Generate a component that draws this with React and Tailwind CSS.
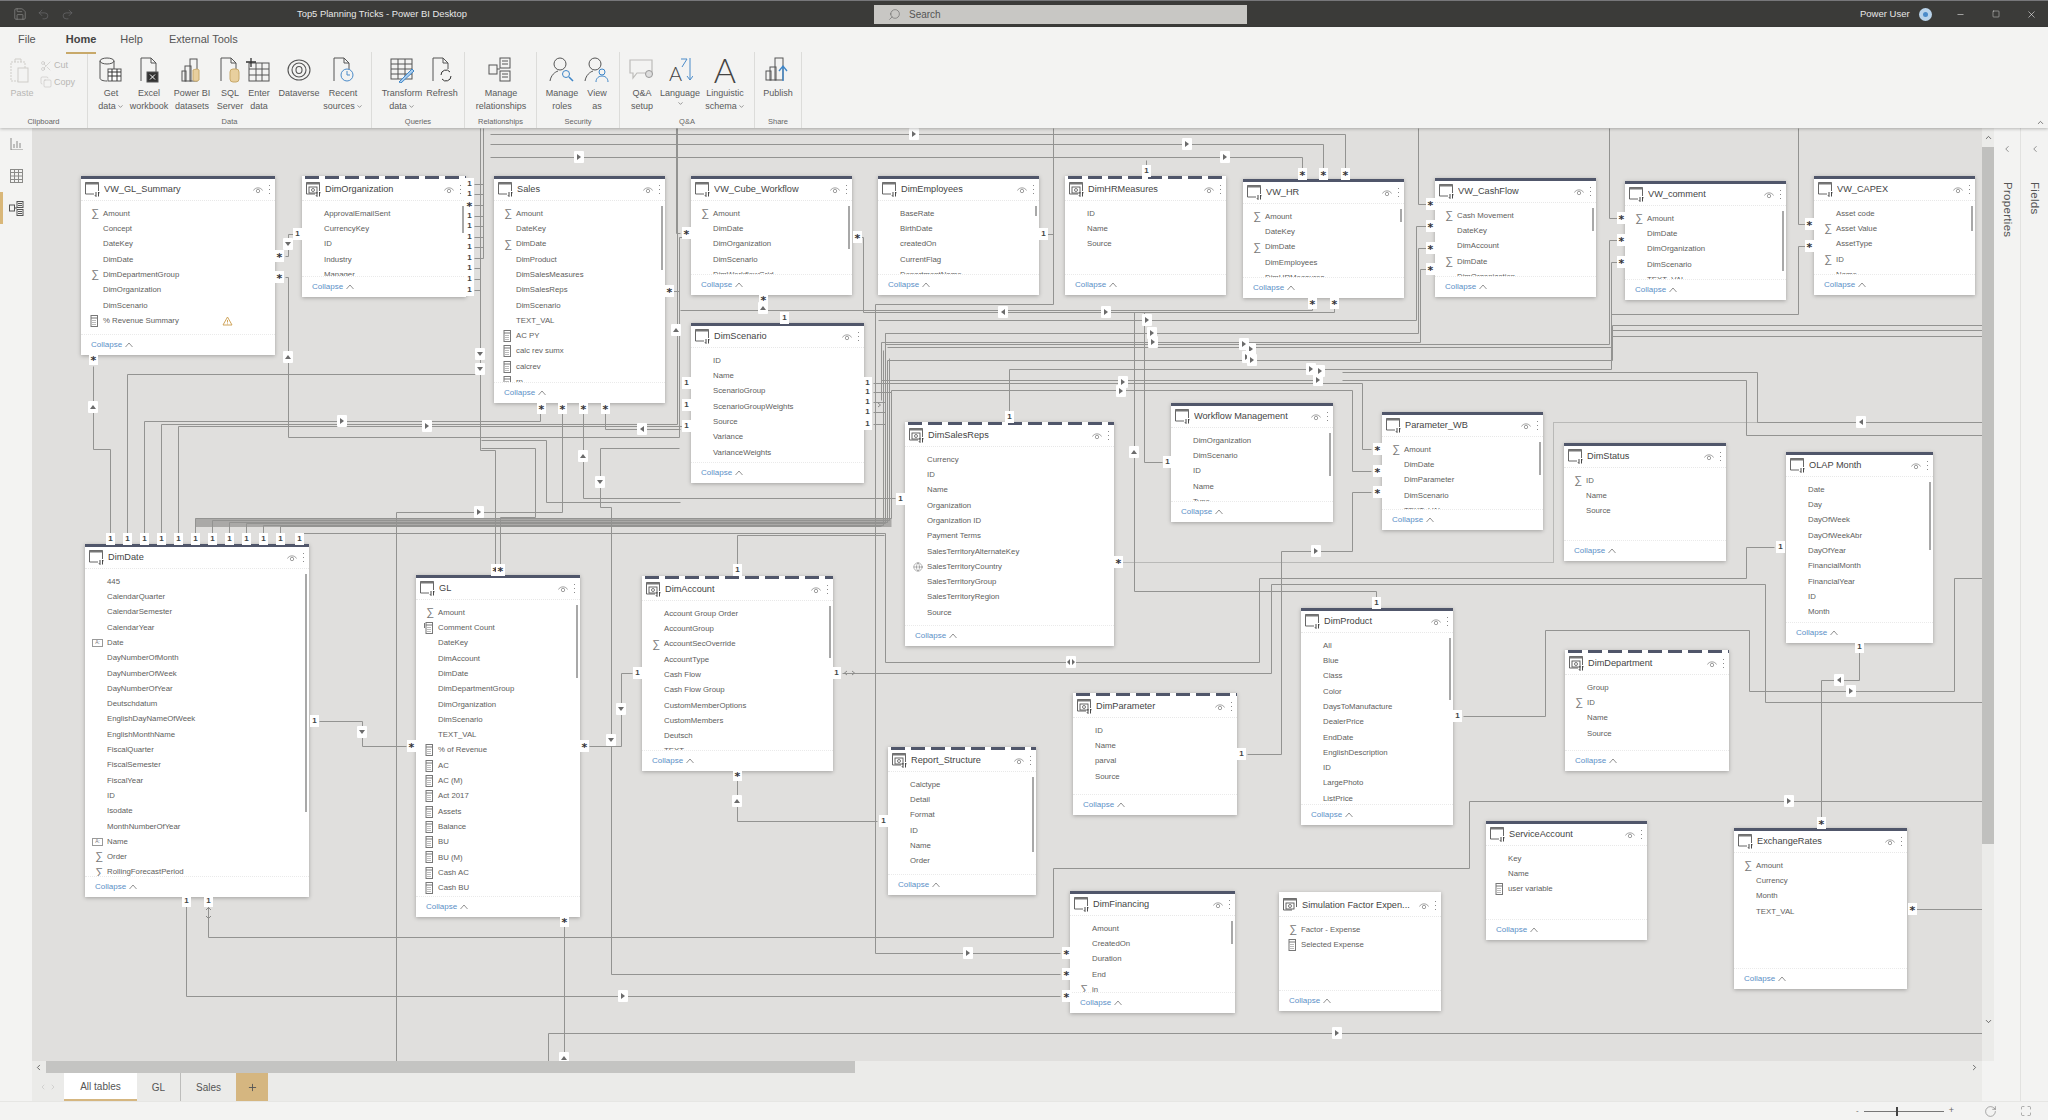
import React from "react";
import { Globe, Scissors, Copy, Minus, Plus, X, Square, Search, ChevronUp, ChevronDown, ChevronLeft, ChevronRight, RotateCw, Save, Undo2, Redo2, Maximize } from "lucide-react";

const OX = 32, OY = 128;

const TABLES = [
  { n: "VW_GL_Summary", x: 81, y: 176, w: 194, h: 179, rows: ["S:Amount", "Concept", "DateKey", "DimDate", "S:DimDepartmentGroup", "DimOrganization", "DimScenario", "M:% Revenue Summary!"] },
  { n: "DimOrganization", x: 302, y: 176, w: 164, h: 121, dash: 1, sb: 27, rows: ["ApprovalEmailSent", "CurrencyKey", "ID", "Industry", "Manager"] },
  { n: "Sales", x: 494, y: 176, w: 171, h: 227, sb: 64, rows: ["S:Amount", "DateKey", "S:DimDate", "DimProduct", "DimSalesMeasures", "DimSalesReps", "DimScenario", "TEXT_VAL", "M:AC PY", "M:calc rev sumx", "M:calcrev", "M:rp"] },
  { n: "VW_Cube_Workflow", x: 691, y: 176, w: 161, h: 119, sb: 43, rows: ["S:Amount", "DimDate", "DimOrganization", "DimScenario", "DimWorkflowGrid"] },
  { n: "DimEmployees", x: 878, y: 176, w: 161, h: 119, sb: 10, rows: ["BaseRate", "BirthDate", "createdOn", "CurrentFlag", "DepartmentName"] },
  { n: "DimHRMeasures", x: 1065, y: 176, w: 161, h: 119, dash: 1, rows: ["ID", "Name", "Source"] },
  { n: "VW_HR", x: 1243, y: 179, w: 161, h: 119, sb: 13, rows: ["S:Amount", "DateKey", "S:DimDate", "DimEmployees", "DimHRMeasures"] },
  { n: "VW_CashFlow", x: 1435, y: 178, w: 161, h: 119, sb: 23, rows: ["S:Cash Movement", "DateKey", "DimAccount", "S:DimDate", "DimOrganization"] },
  { n: "VW_comment", x: 1625, y: 181, w: 161, h: 119, sb: 60, rows: ["S:Amount", "DimDate", "DimOrganization", "DimScenario", "TEXT_VAL"] },
  { n: "VW_CAPEX", x: 1814, y: 176, w: 161, h: 119, sb: 25, rows: ["Asset code", "S:Asset Value", "AssetType", "S:ID", "Name"] },
  { n: "DimScenario", x: 691, y: 323, w: 173, h: 160, rows: ["ID", "Name", "ScenarioGroup", "ScenarioGroupWeights", "Source", "Variance", "VarianceWeights"] },
  { n: "DimSalesReps", x: 905, y: 422, w: 209, h: 224, dash: 1, rows: ["Currency", "ID", "Name", "Organization", "Organization ID", "Payment Terms", "SalesTerritoryAlternateKey", "G:SalesTerritoryCountry", "SalesTerritoryGroup", "SalesTerritoryRegion", "Source"] },
  { n: "Workflow Management", x: 1171, y: 403, w: 162, h: 119, sb: 43, rows: ["DimOrganization", "DimScenario", "ID", "Name", "Type"] },
  { n: "Parameter_WB", x: 1382, y: 412, w: 161, h: 118, sb: 33, rows: ["S:Amount", "DimDate", "DimParameter", "DimScenario", "TEXT_VAL"] },
  { n: "DimStatus", x: 1564, y: 443, w: 162, h: 118, rows: ["S:ID", "Name", "Source"] },
  { n: "OLAP Month", x: 1786, y: 452, w: 147, h: 191, sb: 68, rows: ["Date", "Day", "DayOfWeek", "DayOfWeekAbr", "DayOfYear", "FinancialMonth", "FinancialYear", "ID", "Month"] },
  { n: "DimDate", x: 85, y: 544, w: 224, h: 353, sb: 238, rows: ["445", "CalendarQuarter", "CalendarSemester", "CalendarYear", "D:Date", "DayNumberOfMonth", "DayNumberOfWeek", "DayNumberOfYear", "Deutschdatum", "EnglishDayNameOfWeek", "EnglishMonthName", "FiscalQuarter", "FiscalSemester", "FiscalYear", "ID", "Isodate", "MonthNumberOfYear", "D:Name", "S:Order", "S:RollingForecastPeriod"] },
  { n: "GL", x: 416, y: 575, w: 164, h: 342, sb: 73, rows: ["S:Amount", "K:Comment Count", "DateKey", "DimAccount", "DimDate", "DimDepartmentGroup", "DimOrganization", "DimScenario", "TEXT_VAL", "M:% of Revenue", "M:AC", "M:AC (M)", "M:Act 2017", "M:Assets", "M:Balance", "M:BU", "M:BU (M)", "M:Cash AC", "M:Cash BU"] },
  { n: "DimAccount", x: 642, y: 576, w: 191, h: 195, dash: 1, sb: 52, rows: ["Account Group Order", "AccountGroup", "S:AccountSecOverride", "AccountType", "Cash Flow", "Cash Flow Group", "CustomMemberOptions", "CustomMembers", "Deutsch", "TEXT"] },
  { n: "DimProduct", x: 1301, y: 608, w: 152, h: 217, sb: 62, rows: ["All", "Blue", "Class", "Color", "DaysToManufacture", "DealerPrice", "EndDate", "EnglishDescription", "ID", "LargePhoto", "ListPrice"] },
  { n: "DimDepartment", x: 1565, y: 650, w: 164, h: 121, dash: 1, rows: ["Group", "S:ID", "Name", "Source"] },
  { n: "DimParameter", x: 1073, y: 693, w: 164, h: 122, dash: 1, rows: ["ID", "Name", "parval", "Source"] },
  { n: "Report_Structure", x: 888, y: 747, w: 148, h: 148, dash: 1, sb: 75, rows: ["Calctype", "Detail", "Format", "ID", "Name", "Order"] },
  { n: "DimFinancing", x: 1070, y: 891, w: 165, h: 122, sb: 23, rows: ["Amount", "CreatedOn", "Duration", "End", "S:in"] },
  { n: "Simulation Factor Expen...", x: 1279, y: 892, w: 162, h: 119, sim: 1, rows: ["S:Factor - Expense", "M:Selected Expense"] },
  { n: "ServiceAccount", x: 1486, y: 821, w: 161, h: 119, rows: ["Key", "Name", "M:user variable"] },
  { n: "ExchangeRates", x: 1734, y: 828, w: 173, h: 161, rows: ["S:Amount", "Currency", "Month", "TEXT_VAL"] },
];

const LINES = [
  [[93, 366], [93, 449], [110, 449], [110, 539]],
  [[127, 539], [127, 374], [480, 374]],
  [[144, 539], [144, 421], [540, 421], [540, 408]],
  [[161, 539], [161, 424], [677, 424], [677, 128]],
  [[178, 539], [178, 426], [686, 426]],
  [[285, 256], [288, 256], [288, 234], [293, 234]],
  [[285, 277], [288, 277], [288, 437], [679, 437], [679, 237], [686, 237]],
  [[480, 128], [480, 450], [495, 450], [495, 570]],
  [[483, 128], [483, 258]],
  [[474, 184], [483, 184]], [[474, 194], [483, 194]], [[474, 205], [483, 205]], [[474, 216], [483, 216]], [[474, 226], [483, 226]], [[474, 237], [483, 237]], [[474, 247], [483, 247]], [[474, 258], [483, 258]], [[474, 268], [480, 268]], [[474, 279], [480, 279]], [[474, 290], [480, 290]],
  [[481, 440], [546, 440], [546, 502], [680, 502]],
  [[481, 448], [535, 448], [535, 517], [500, 517], [500, 570]],
  [[562, 408], [562, 512], [396, 512], [396, 1061]],
  [[583, 408], [583, 498], [895, 498]],
  [[605, 408], [605, 429], [680, 429]],
  [[600, 448], [679, 448]],
  [[600, 448], [600, 507], [611, 507], [611, 974], [1060, 974]],
  [[676, 128], [676, 233], [680, 233]],
  [[673, 291], [679, 291]],
  [[490, 134], [1345, 134], [1345, 170]],
  [[490, 144], [1323, 144], [1323, 170]],
  [[490, 157], [1302, 157], [1302, 170]],
  [[1146, 160], [1146, 166]],
  [[1047, 234], [1053, 234]],
  [[1053, 128], [1053, 304], [875, 304], [875, 953], [1060, 953]],
  [[680, 310], [1312, 310], [1312, 307]],
  [[860, 237], [863, 237], [863, 312], [1334, 312], [1334, 307]],
  [[1134, 312], [1134, 591], [1376, 591], [1376, 598]],
  [[1144, 312], [1144, 462], [1162, 462]],
  [[1418, 128], [1418, 204], [1426, 204]],
  [[1430, 226], [1416, 226], [1416, 320], [878, 320]],
  [[1430, 248], [1418, 248], [1418, 333], [885, 333], [885, 345]],
  [[1430, 269], [1420, 269], [1420, 342], [881, 342], [881, 400]],
  [[1609, 128], [1609, 218], [1617, 218]],
  [[1617, 240], [1609, 240], [1609, 344], [885, 344]],
  [[1617, 262], [1611, 262], [1611, 347], [887, 347]],
  [[1798, 128], [1798, 224], [1805, 224]],
  [[1805, 246], [1798, 246], [1798, 314], [1611, 314], [1611, 369], [1320, 369]],
  [[1612, 325], [1982, 325]], [[1612, 330], [1982, 330]], [[1612, 336], [1982, 336]],
  [[1612, 325], [1612, 360], [887, 360], [887, 522]],
  [[1009, 412], [1009, 369], [1320, 369]],
  [[881, 380], [1320, 380]],
  [[873, 383], [1362, 383], [1362, 449], [1371, 449]],
  [[873, 392], [891, 392], [891, 390], [1352, 390], [1352, 471], [1371, 471]],
  [[873, 402], [885, 402]], [[873, 412], [885, 412]], [[873, 424], [885, 424]],
  [[1371, 492], [1352, 492], [1352, 551], [1281, 551], [1281, 754], [1247, 754]],
  [[195, 539], [195, 518], [891, 518], [891, 392]],
  [[212, 539], [212, 520], [889, 520], [889, 358]],
  [[229, 539], [229, 522], [887, 522]],
  [[246, 539], [246, 523], [885, 523], [885, 333]],
  [[263, 539], [263, 525], [883, 525], [883, 350]],
  [[280, 539], [280, 526], [881, 526]],
  [[299, 539], [299, 533], [885, 533]],
  [[885, 533], [885, 662], [1259, 662], [1259, 578], [1746, 578], [1746, 547], [1774, 547]],
  [[737, 570], [737, 535], [884, 535]],
  [[1271, 584], [1271, 673], [842, 673]],
  [[1271, 584], [1765, 584], [1765, 702], [1982, 702]],
  [[1342, 372], [1757, 372], [1757, 422], [1982, 422]],
  [[1342, 380], [1746, 380], [1746, 435], [1982, 435]],
  [[1463, 716], [1545, 716], [1545, 630], [1749, 630], [1749, 691], [1954, 691], [1954, 578], [1982, 578]],
  [[1859, 650], [1859, 680], [1821, 680], [1821, 818]],
  [[208, 905], [208, 937], [1053, 937], [1053, 868], [1469, 868], [1469, 801], [1982, 801]],
  [[186, 905], [186, 996], [1060, 996]],
  [[548, 1061], [548, 1033], [1982, 1033]],
  [[564, 925], [564, 1061]],
  [[1916, 909], [1982, 909]],
  [[877, 821], [737, 821], [737, 780]],
  [[589, 746], [621, 746], [621, 673], [632, 673]],
  [[319, 721], [362, 721], [362, 746], [406, 746]],
];

const DOTTED = [
  [[1123, 562], [1553, 562], [1553, 422], [1982, 422]],
];

const ONES = [
  [110, 539], [127, 539], [144, 539], [161, 539], [178, 539], [195, 539], [212, 539], [229, 539], [246, 539], [263, 539], [280, 539], [299, 539],
  [297, 234], [469, 184], [469, 194], [469, 216], [469, 226], [469, 237], [469, 247], [469, 258], [469, 268], [469, 279], [469, 290],
  [686, 383], [686, 405], [686, 426], [784, 318], [867, 383], [867, 392], [867, 402], [867, 412], [867, 424], [1043, 234], [1146, 171],
  [1009, 417], [1167, 462], [900, 499], [1376, 603], [1241, 754], [836, 673], [1780, 547], [1859, 647], [1457, 716], [186, 901], [208, 901],
  [314, 721], [637, 673], [737, 570], [883, 821],
];
const STARS = [
  [93, 359], [279, 256], [279, 277], [469, 205], [541, 408], [562, 408], [583, 408], [605, 408], [669, 291], [686, 233], [857, 237], [763, 299],
  [1302, 174], [1323, 174], [1345, 174], [1312, 303], [1334, 303], [1430, 204], [1430, 226], [1430, 248], [1430, 269], [1621, 218], [1621, 240], [1621, 262],
  [1809, 224], [1809, 246], [1377, 449], [1377, 471], [1377, 492], [495, 570], [500, 570], [584, 746], [411, 746], [564, 921], [737, 775],
  [1118, 562], [1066, 953], [1066, 974], [1066, 996], [1821, 823], [1912, 909],
];
const BADGES = [
  [93, 407, "u"], [288, 244, "d"], [288, 357, "u"], [480, 354, "d"], [480, 369, "d"], [342, 421, "r"], [427, 426, "r"], [642, 429, "l"], [583, 456, "u"], [600, 482, "d"], [479, 512, "r"], [676, 330, "u"], [763, 308, "u"],
  [1003, 312, "l"], [1106, 312, "r"], [1147, 320, "r"], [1152, 333, "r"], [1153, 342, "r"], [1244, 344, "r"], [1251, 349, "r"], [1247, 357, "r"], [1252, 360, "r"], [1311, 369, "r"], [1320, 371, "r"], [1318, 380, "r"], [1123, 382, "r"], [1121, 391, "r"],
  [1134, 452, "u"], [1316, 551, "r"], [1071, 662, "b"], [1861, 422, "l"], [1851, 691, "r"], [1839, 680, "l"], [1789, 801, "r"], [1337, 1033, "r"], [623, 996, "r"], [968, 953, "r"], [737, 801, "u"], [362, 732, "d"], [621, 709, "d"], [611, 740, "d"], [579, 157, "r"], [914, 134, "r"], [1187, 144, "r"], [1225, 157, "r"], [564, 1058, "u"],
];
const CHEVRONS = [
  [208, 909, "M1 4 3.5 1.5 6 4"], [208, 917, "M1 2 3.5 4.5 6 2"], [846, 673, "M4 1 1.5 3 4 5"], [853, 673, "M2 1 4.5 3 2 5"], [879, 405, "M2 1 4.5 3 2 5"],
];

const sinkPoints = (p) => p.map(([x, y]) => `${x - OX + 0.5},${y - OY + 0.5}`).join(" ");

function Tri({ d }) {
  const shape = { u: "M4 2 7 6H1z", d: "M4 6 1 2h6z", l: "M2 4 6 1v6z", r: "M6 4 2 1v6z", b: "M0 4 3 1v6zM8 4 5 1v6z" }[d];
  return (
    <svg width="8" height="8" viewBox="0 0 8 8">
      <path d={shape} fill="#6b6b6b" />
    </svg>
  );
}

function FieldIcon({ t }) {
  if (t === "S") return <span className="text-[11px] leading-none text-[#777]">∑</span>;
  if (t === "G") return <Globe size={10} strokeWidth={1} color="#555" />;
  if (t === "D")
    return (
      <span className="flex h-[8px] w-[11px] items-center justify-center border border-[#999] text-[5px] leading-none text-[#777]">
        A:
      </span>
    );
  if (t === "M" || t === "K")
    return (
      <svg width="10" height="12" viewBox="0 0 10 12" fill="none" stroke="#777" strokeWidth="1">
        <rect x="2" y="0.5" width="6.5" height="11" />
        <path d="M2 3h6.5" />
        <path d="M3.5 5.5h3.5M3.5 7.5h3.5M3.5 9.5h3.5" strokeDasharray="1 1" />
        {t === "K" && <path d="M0.5 1v5" />}
      </svg>
    );
  return null;
}

function TableIcon({ dash, sim }) {
  return (
    <svg width="15" height="15" viewBox="0 0 15 15" fill="none" className="shrink-0">
      <path d="M0.5 12V0.5H13.5V9" stroke="#555" strokeWidth="0.9" />
      <path d="M0.5 12H9" stroke="#555" strokeWidth="0.9" />
      <rect x="0.5" y="0.5" width="13" height="2" fill="#777" />
      {(dash || sim) && <rect x="3" y="5" width="8" height="6" stroke="#555" strokeWidth="0.9" />}
      {(dash || sim) && <circle cx="7" cy="8" r="1.5" stroke="#555" strokeWidth="0.8" />}
      {!sim && <path d="M11 10v4.5M11 14.5l-1-1.2M13.5 14.5V10M13.5 10l1 1.2" stroke="#333" strokeWidth="0.9" />}
    </svg>
  );
}

function Eye() {
  return (
    <svg width="10" height="8" viewBox="0 0 10 8" fill="none" stroke="#888" strokeWidth="0.8">
      <path d="M0.5 4.5C2 1 8 1 9.5 4.5" />
      <circle cx="5" cy="5" r="1.7" />
    </svg>
  );
}

function Kebab() {
  return (
    <div className="flex flex-col gap-[2.5px]">
      <div className="h-[1.5px] w-[1.5px] rounded-full bg-[#666]" />
      <div className="h-[1.5px] w-[1.5px] rounded-full bg-[#666]" />
      <div className="h-[1.5px] w-[1.5px] rounded-full bg-[#666]" />
    </div>
  );
}

function Table({ t }) {
  const hasWarn = (r) => r.endsWith("!");
  return (
    <div
      className="absolute flex flex-col bg-white shadow-[0_1px_4px_rgba(0,0,0,0.28)]"
      style={{ left: t.x - OX, top: t.y - OY, width: t.w, height: t.h }}
    >
      {t.sim ? (
        <div className="h-[3px] shrink-0 bg-white" />
      ) : t.dash ? (
        <div className="h-[3px] shrink-0 bg-[repeating-linear-gradient(90deg,#fff_0px,#fff_3px,#50566a_3px,#50566a_17px,#fff_17px,#fff_20px)]" />
      ) : (
        <div className="h-[3px] shrink-0 bg-[#50566a]" />
      )}
      <div className="flex h-[22px] shrink-0 items-center border-b border-dotted border-[#e8e8e8] pl-[4px] pr-[5px]">
        <TableIcon dash={t.dash} sim={t.sim} />
        <span className="ml-[4px] flex-1 truncate text-[9.2px] text-[#444]">{t.n}</span>
        <Eye />
        <div className="ml-[6px]">
          <Kebab />
        </div>
      </div>
      <div className="relative flex-1 overflow-hidden pt-[5px]">
        {t.rows.map((r) => {
          const parts = r.includes(":") ? r.split(":") : [null, r];
          const label = parts[1].replace("!", "");
          return (
            <div key={r} className="flex h-[15.3px] items-center">
              <div className="flex w-[22px] shrink-0 items-center justify-end pr-[4px]">
                {parts[0] && <FieldIcon t={parts[0]} />}
              </div>
              <span className="whitespace-nowrap text-[7.8px] text-[#605e5c]">{label}</span>
              {hasWarn(r) && (
                <svg className="ml-[43px]" width="11" height="10" viewBox="0 0 11 10" fill="none" stroke="#d0a55c">
                  <path d="M5.5 1 10 9H1z" />
                  <path d="M5.5 4v2.5M5.5 7.5v.8" />
                </svg>
              )}
            </div>
          );
        })}
        {t.sb && (
          <div
            className="absolute right-[2px] top-[5px] w-[2px] bg-[#a8a8a8]"
            style={{ height: t.sb }}
          />
        )}
      </div>
      <div className="flex h-[21px] shrink-0 items-center border-t border-dotted border-[#eaeaea] pl-[10px] text-[8px] text-[#5b8fc7]">
        Collapse
        <svg className="ml-[3px]" width="8" height="6" viewBox="0 0 8 6" fill="none" stroke="#777" strokeWidth="0.8">
          <path d="M0.5 5 4 1l3.5 4" />
        </svg>
      </div>
    </div>
  );
}

function Canvas() {
  return (
    <div className="relative flex-1 overflow-hidden bg-[#e0dfdd]">
      <svg className="absolute left-0 top-0" width="1950" height="933" fill="none">
        <polyline points={sinkPoints([[195, 522], [891, 522]])} stroke="#aaa9a7" strokeWidth="9" />
        {LINES.map((p, i) => (
          <polyline key={i} points={sinkPoints(p)} stroke="#939391" strokeWidth="1" />
        ))}
        {DOTTED.map((p, i) => (
          <polyline key={i} points={sinkPoints(p)} stroke="#939391" strokeWidth="1" strokeDasharray="1 1" />
        ))}
      </svg>
      {TABLES.map((t) => (
        <Table key={t.n} t={t} />
      ))}
      {ONES.map(([x, y], i) => (
        <div
          key={i}
          className="absolute flex h-[12px] w-[9px] items-center justify-center bg-white text-[8px] font-bold text-[#444]"
          style={{ left: x - OX - 4, top: y - OY - 6 }}
        >
          1
        </div>
      ))}
      {STARS.map(([x, y], i) => (
        <div
          key={i}
          className="absolute flex h-[12px] w-[9px] justify-center bg-white font-['DejaVu_Sans'] text-[11px] font-bold leading-[12px] text-[#333]"
          style={{ left: x - OX - 4, top: y - OY - 6 }}
        >
          <span className="relative top-[2px]">*</span>
        </div>
      ))}
      {BADGES.map(([x, y, d], i) => (
        <div
          key={i}
          className="absolute flex h-[12px] w-[10px] items-center justify-center rounded-[1px] bg-white"
          style={{ left: x - OX - 5, top: y - OY - 6 }}
        >
          <Tri d={d} />
        </div>
      ))}
      {CHEVRONS.map(([x, y, d], i) => (
        <svg
          key={i}
          className="absolute"
          width="7"
          height="6"
          viewBox="0 0 7 6"
          fill="none"
          stroke="#8a8a88"
          style={{ left: x - OX - 3, top: y - OY - 3 }}
        >
          <path d={d} />
        </svg>
      ))}
    </div>
  );
}

const S = { fill: "none", stroke: "#555", strokeWidth: 1 };
const RIBBON_ICONS = {
  paste: (
    <g fill="none" stroke="#cfcdc9">
      <rect x="2" y="5" width="14" height="19" strokeDasharray="2 1" />
      <rect x="9" y="11" width="10" height="14" fill="#f3f3f2" />
      <path d="M6 5V2h6v3" />
    </g>
  ),
  get: (
    <g {...S}>
      <ellipse cx="9" cy="4" rx="7" ry="3" />
      <path d="M2 4v17c0 2 3 3 7 3M16 4v8" />
      <rect x="10" y="12" width="13" height="12" fill="#fff" />
      <path d="M10 15h13M10 19h13M14 12v12M19 12v12" stroke="#333" />
    </g>
  ),
  excel: (
    <g {...S}>
      <path d="M5 24V1h10l5 5v10" />
      <path d="M15 1v5h5" />
      <rect x="11" y="15" width="11" height="10" fill="#333" />
      <path d="M14 17.5l5 5M19 17.5l-5 5" stroke="#fff" />
    </g>
  ),
  bi: (
    <g {...S}>
      <rect x="11" y="2" width="7" height="22" />
      <rect x="6" y="9" width="6" height="15" />
      <rect x="3" y="14" width="4" height="10" />
      <path d="M14 13c5-2 6 0 6 0v10c-2 2-6 1-6 0z" fill="#e8cf9e" stroke="#c8a96a" />
    </g>
  ),
  sql: (
    <g {...S}>
      <path d="M4 24V1h10l5 5v8" />
      <path d="M14 1v5h5" />
      <rect x="13" y="12" width="9" height="13" rx="3" fill="#e8cf9e" stroke="#c8a96a" />
    </g>
  ),
  enter: (
    <g {...S}>
      <rect x="3" y="6" width="20" height="18" />
      <path d="M3 12h20M3 18h20M10 6v18M16 6v18" />
      <path d="M0 5h10M5 1v9" stroke="#333" strokeWidth="1.3" />
    </g>
  ),
  dataverse: (
    <g {...S} strokeWidth="1.1">
      <ellipse cx="13" cy="13" rx="11" ry="10" />
      <ellipse cx="13" cy="13" rx="7" ry="7" />
      <ellipse cx="13" cy="13" rx="3" ry="3.5" />
    </g>
  ),
  recent: (
    <g {...S}>
      <path d="M4 24V1h10l5 5v7" />
      <path d="M14 1v5h5" />
      <circle cx="17" cy="18" r="6" stroke="#4b8bc9" fill="#f3f3f2" />
      <path d="M17 14v4h3" stroke="#4b8bc9" />
    </g>
  ),
  transform: (
    <g {...S}>
      <rect x="2" y="2" width="21" height="20" />
      <path d="M2 7h21M2 12h21M2 17h21M9 2v20M16 2v20" />
      <path d="M10 25l13-13 2 2-13 12z" fill="#a9cdee" stroke="#3f86c8" />
    </g>
  ),
  refresh: (
    <g {...S}>
      <path d="M4 24V1h10l5 5v6" />
      <path d="M14 1v5h5" />
      <path d="M12 18a5 5 0 0 1 9-3M22 19a5 5 0 0 1-9 3" stroke="#333" />
    </g>
  ),
  rel: (
    <g {...S}>
      <rect x="12" y="1" width="10" height="10" />
      <rect x="12" y="14" width="10" height="10" />
      <rect x="1" y="8" width="8" height="9" />
      <path d="M9 12h3M14 4h6M14 7h6M14 17h6M14 20h6" />
    </g>
  ),
  roles: (
    <g {...S}>
      <circle cx="11" cy="7" r="6" />
      <path d="M1 24c1-6 5-9 8-10" />
      <circle cx="17" cy="17" r="3.5" stroke="#3f86c8" />
      <path d="M20 20l4 4" stroke="#3f86c8" strokeWidth="1.6" />
    </g>
  ),
  view: (
    <g {...S}>
      <circle cx="11" cy="7" r="6" />
      <path d="M1 24c1-6 5-9 8-10" />
      <circle cx="18" cy="15" r="3" stroke="#3f86c8" />
      <path d="M12 25c0-4 3-6 6-6s6 2 6 6" stroke="#3f86c8" />
    </g>
  ),
  qa: (
    <g fill="none" stroke="#bdbcb9">
      <path d="M1 3h22v13H8l-4 5v-5H1z" strokeWidth="1.2" />
      <circle cx="20" cy="17" r="3.5" fill="#ddd" stroke="#999" />
    </g>
  ),
  publish: (
    <g {...S}>
      <rect x="10" y="1" width="8" height="22" />
      <rect x="5" y="10" width="6" height="13" />
      <rect x="1" y="14" width="5" height="9" />
      <path d="M18 24V10M14 14l4-5 4 5" stroke="#3f86c8" strokeWidth="1.4" />
    </g>
  ),
};

function RibbonIcon({ k }) {
  if (k === "language")
    return (
      <div className="relative h-[26px] w-[26px]">
        <span className="absolute bottom-0 left-[2px] font-['Lato'] text-[20px] font-light leading-none text-[#444]">A</span>
        <svg className="absolute right-0 top-0" width="14" height="24" viewBox="0 0 14 24" fill="none" stroke="#4b8bc9">
          <path d="M2 2h6l-5 8M11 1v22M8 19l3 4 3-4" />
        </svg>
      </div>
    );
  if (k === "linguistic") return <span className="font-['Lato'] text-[34px] font-light leading-[26px] text-[#444]">A</span>;
  return (
    <svg width="26" height="26" viewBox="0 0 26 26">
      {RIBBON_ICONS[k]}
    </svg>
  );
}

function RBtn({ w, k, label, label2, caret, dim }) {
  return (
    <div className="flex shrink-0 flex-col items-center pt-[3px]" style={{ width: w }}>
      <div className="flex h-[30px] items-center justify-center">
        <RibbonIcon k={k} />
      </div>
      <div className={`mt-[2px] whitespace-nowrap text-[9px] leading-[13px] ${dim ? "text-[#b8b7b4]" : "text-[#5a5a5a]"}`}>{label}</div>
      <div className="flex items-center whitespace-nowrap text-[9px] leading-[13px] text-[#5a5a5a]">
        {label2}
        {caret && <ChevronDown size={7} strokeWidth={2} className="ml-[1px]" />}
      </div>
    </div>
  );
}

function RGroup({ w, name, children }) {
  return (
    <div className="flex shrink-0 flex-col border-r border-[#dcdcda]" style={{ width: w }}>
      <div className="flex flex-1">{children}</div>
      <div className="pb-[1px] text-center text-[7.5px] leading-[11px] text-[#666]">{name}</div>
    </div>
  );
}

function Ribbon() {
  return (
    <div className="relative z-10 flex h-[101px] shrink-0 flex-col bg-[#f3f3f2] shadow-[0_1px_3px_rgba(0,0,0,0.25)]">
      <div className="flex h-[25px] shrink-0 items-center text-[11px] text-[#555]">
        <span className="ml-[18px]">File</span>
        <span className="relative ml-[30px] font-semibold text-[#444]">
          Home
          <span className="absolute -bottom-[6px] left-0 h-[2px] w-full bg-[#c8a96a]" />
        </span>
        <span className="ml-[24px]">Help</span>
        <span className="ml-[26px]">External Tools</span>
      </div>
      <div className="flex flex-1">
        <RGroup w={88} name="Clipboard">
          <div className="ml-[8px]">
            <RBtn w={28} k="paste" label="Paste" dim />
          </div>
          <div className="ml-[4px] flex flex-col gap-[3px] pt-[7px] text-[9px] text-[#b8b7b4]">
            <div className="flex items-center gap-[2px]">
              <Scissors size={12} strokeWidth={1} />
              Cut
            </div>
            <div className="flex items-center gap-[2px]">
              <Copy size={12} strokeWidth={1} />
              Copy
            </div>
          </div>
        </RGroup>
        <RGroup w={284} name="Data">
          <RBtn w={46} k="get" label="Get" label2="data" caret />
          <RBtn w={30} k="excel" label="Excel" label2="workbook" />
          <RBtn w={56} k="bi" label="Power BI" label2="datasets" />
          <RBtn w={20} k="sql" label="SQL" label2="Server" />
          <RBtn w={38} k="enter" label="Enter" label2="data" />
          <RBtn w={42} k="dataverse" label="Dataverse" />
          <RBtn w={46} k="recent" label="Recent" label2="sources" caret />
        </RGroup>
        <RGroup w={93} name="Queries">
          <RBtn w={60} k="transform" label="Transform" label2="data" caret />
          <RBtn w={20} k="refresh" label="Refresh" />
        </RGroup>
        <RGroup w={72} name="Relationships">
          <RBtn w={72} k="rel" label="Manage" label2="relationships" />
        </RGroup>
        <RGroup w={83} name="Security">
          <RBtn w={50} k="roles" label="Manage" label2="roles" />
          <RBtn w={20} k="view" label="View" label2="as" />
        </RGroup>
        <RGroup w={135} name="Q&A">
          <RBtn w={44} k="qa" label="Q&A" label2="setup" />
          <RBtn w={32} k="language" label="Language" label2="" caret />
          <RBtn w={58} k="linguistic" label="Linguistic" label2="schema" caret />
        </RGroup>
        <RGroup w={47} name="Share">
          <RBtn w={46} k="publish" label="Publish" />
        </RGroup>
        <div className="flex flex-1 items-end justify-end pb-[1px] pr-[3px]">
          <ChevronUp size={9} strokeWidth={2} color="#555" />
        </div>
      </div>
    </div>
  );
}

function TitleBar() {
  return (
    <div className="flex h-[27px] shrink-0 items-center border-t border-[#77777a] bg-[#3b3b39] text-[#e8e8e8]">
      <Save size={14} strokeWidth={1} color="#9a9a98" className="ml-[13px]" />
      <Undo2 size={13} strokeWidth={1} color="#77777a" className="ml-[10px]" />
      <Redo2 size={13} strokeWidth={1} color="#77777a" className="ml-[11px]" />
      <span className="ml-[223px] w-[168px] whitespace-nowrap text-[9.4px]">Top5 Planning Tricks - Power BI Desktop</span>
      <div className="ml-[409px] flex h-[19px] w-[373px] items-center bg-[#c8c7c4] pl-[14px] text-[10px] text-[#555]">
        <Search size={13} strokeWidth={1} className="-scale-x-100" />
        <span className="ml-[8px]">Search</span>
      </div>
      <span className="ml-[613px] whitespace-nowrap text-[9.5px]">Power User</span>
      <div className="ml-[9px] flex h-[13px] w-[13px] items-center justify-center rounded-full bg-[#b9d3ea]">
        <div className="h-[5px] w-[5px] rounded-full bg-[#4b8bc9]" />
      </div>
      <Minus size={9} strokeWidth={1.4} color="#fff" className="ml-[24px]" />
      <Square size={8} strokeWidth={1.2} color="#fff" className="ml-[27px]" />
      <X size={11} strokeWidth={1.2} color="#fff" className="ml-[26px]" />
    </div>
  );
}

function Rail() {
  return (
    <div className="relative flex w-[32px] shrink-0 flex-col items-center bg-[#f3f3f2] pt-[10px]">
      <svg width="13" height="12" viewBox="0 0 13 12" fill="none" stroke="#8a8a88">
        <path d="M1 0v12h12M4 10V6M7 10V3M10 10V5" />
      </svg>
      <svg className="mt-[19px]" width="13" height="14" viewBox="0 0 13 14" fill="none" stroke="#8a8a88">
        <rect x="0.5" y="0.5" width="12" height="13" />
        <path d="M0.5 3.5h12M0.5 7h12M0.5 10.5h12M4.5 0.5v13M8.5 0.5v13" />
      </svg>
      <svg className="mt-[18px]" width="15" height="15" viewBox="0 0 15 15" fill="none" stroke="#555">
        <rect x="8" y="0.5" width="6" height="6" />
        <rect x="8" y="8.5" width="6" height="6" />
        <rect x="0.5" y="4" width="5" height="6" />
        <path d="M5.5 7H8M9 2.5h4M9 4.5h4M9 10.5h4M9 12.5h4" />
      </svg>
      <div className="absolute left-0 top-[64px] h-[32px] w-[3px] bg-[#d9b779]" />
    </div>
  );
}

function Tabs() {
  return (
    <div className="flex h-[28px] shrink-0 items-stretch bg-[#ebebe9] text-[10px] text-[#555]">
      <div className="flex w-[32px] items-center justify-center gap-[2px]">
        <ChevronLeft size={8} color="#c5c5c3" />
        <ChevronRight size={8} color="#c5c5c3" />
      </div>
      <div className="flex w-[73px] items-center justify-center border-b-2 border-[#d5b680] bg-white">All tables</div>
      <div className="flex w-[44px] items-center justify-center border-r border-[#bdbdbb]">GL</div>
      <div className="flex w-[55px] items-center justify-center">Sales</div>
      <div className="flex w-[32px] items-center justify-center bg-[#d5b680]">
        <Plus size={11} strokeWidth={2} color="#555" />
      </div>
    </div>
  );
}

export default function App() {
  return (
    <div className="flex h-[1120px] w-[2048px] flex-col overflow-hidden bg-[#f3f3f2] font-['Liberation_Sans',Arial,sans-serif]">
      <TitleBar />
      <Ribbon />
      <div className="flex min-h-0 flex-1">
        <Rail />
        <div className="flex w-[1950px] shrink-0 flex-col">
          <Canvas />
          <div className="flex h-[12px] shrink-0 items-center bg-[#ebebe9]">
            <ChevronLeft size={9} strokeWidth={2} color="#444" className="ml-[2px]" />
            <div className="ml-[3px] h-full w-[809px] bg-[#c4c4c2]" />
            <div className="flex-1" />
            <ChevronRight size={9} strokeWidth={2} color="#444" className="mr-[3px]" />
          </div>
          <Tabs />
        </div>
        <div className="flex w-[12px] shrink-0 flex-col items-center bg-[#ebebe9]">
          <ChevronUp size={9} strokeWidth={2} color="#444" className="my-[5px]" />
          <div className="h-[697px] w-full bg-[#c0c0be]" />
          <div className="flex-1" />
          <ChevronDown size={9} strokeWidth={2} color="#444" className="mb-[35px]" />
          <div className="h-[40px] w-full bg-[#f3f3f2]" />
        </div>
        <div className="flex w-[27px] shrink-0 flex-col items-center border-r border-[#e2e2e0] bg-[#f3f3f2] pt-[16px] text-[#555]">
          <ChevronLeft size={10} strokeWidth={1.5} />
          <span className="mt-[28px] text-[11.5px] tracking-[0.3px] [writing-mode:vertical-rl]">Properties</span>
        </div>
        <div className="flex w-[27px] shrink-0 flex-col items-center bg-[#f3f3f2] pt-[16px] text-[#555]">
          <ChevronLeft size={10} strokeWidth={1.5} />
          <span className="mt-[28px] text-[11.5px] tracking-[0.3px] [writing-mode:vertical-rl]">Fields</span>
        </div>
      </div>
      <div className="flex h-[19px] shrink-0 items-center justify-end border-t border-[#e6e6e4] bg-[#f3f3f2] text-[#666]">
        <span className="text-[8px]">-</span>
        <div className="relative mx-[5px] h-[1px] w-[80px] bg-[#777]">
          <div className="absolute left-[32px] top-[-4px] h-[9px] w-[2px] bg-[#444]" />
        </div>
        <span className="text-[9px]">+</span>
        <RotateCw size={13} strokeWidth={1} className="ml-[30px]" />
        <Maximize size={12} strokeWidth={1} className="ml-[23px] mr-[16px]" />
      </div>
    </div>
  );
}
